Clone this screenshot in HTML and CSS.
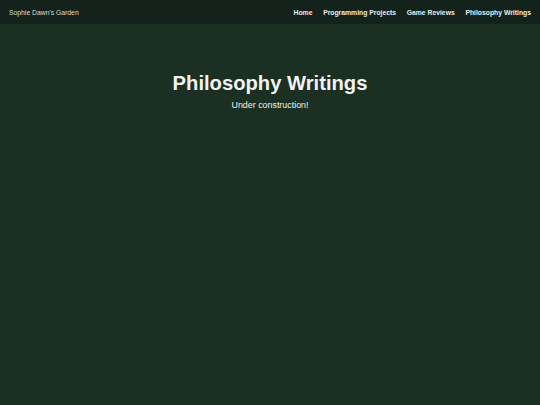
FILE: index.html
```html
<!DOCTYPE html>
<html lang="en">
<head>
<meta charset="utf-8">
<title>Philosophy Writings</title>
<link rel="stylesheet" href="styles.css">
</head>
<body>
<header class="navbar">
  <a class="brand" href="#">Sophie Dawn's Garden</a>
  <nav class="links">
    <a href="#">Home</a>
    <a href="#">Programming Projects</a>
    <a href="#">Game Reviews</a>
    <a href="#">Philosophy Writings</a>
  </nav>
</header>
<main class="content">
  <h1 class="title">Philosophy Writings</h1>
  <p class="subtitle">Under construction!</p>
</main>
</body>
</html>
```
FILE: styles.css
```css
html, body {
  margin: 0;
  padding: 0;
  height: 100%;
}
body {
  background: #1b3022;
  font-family: "Liberation Sans", Arial, sans-serif;
  color: #f0f0f0;
}
.navbar {
  display: flex;
  align-items: center;
  justify-content: space-between;
  height: 24px;
  padding: 0 9px 0 9px;
  background: #13221a;
}
.brand {
  color: #d8dcd8;
  font-size: 6.8px;
  text-decoration: none;
}
.links {
  display: flex;
  gap: 10.7px;
}
.links a {
  color: #e8ece8;
  font-size: 6.8px;
  font-weight: bold;
  text-decoration: none;
}
.content {
  display: flex;
  flex-direction: column;
  align-items: center;
  padding-top: 47px;
}
.title {
  margin: 0;
  font-size: 20.2px;
  font-weight: bold;
  color: #f2f2f2;
  line-height: 24px;
}
.subtitle {
  margin: 5px 0 0;
  font-size: 8.9px;
  color: #f0f0f0;
}
```
